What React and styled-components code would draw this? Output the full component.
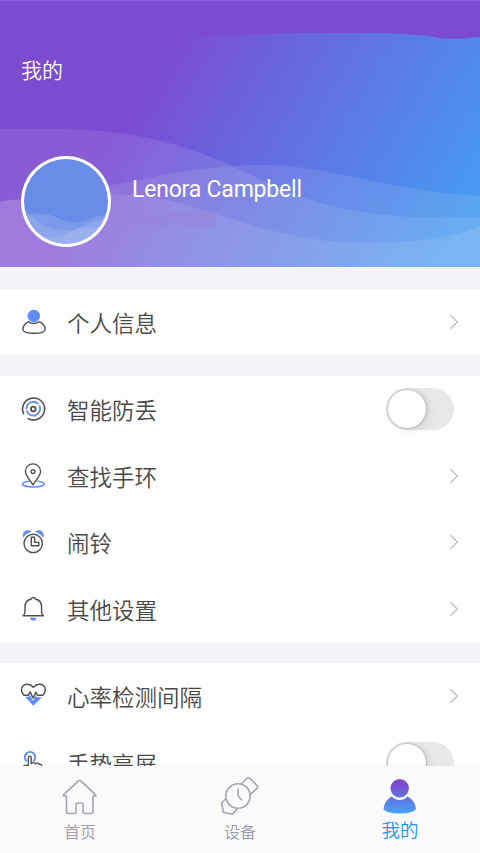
import styled, { createGlobalStyle } from "styled-components";

const GlobalStyle = createGlobalStyle`
  * {
    box-sizing: border-box;
  }

  body {
    margin: 0;
    background-color: #f4f4f8;
    font-family: Roboto, "Noto Sans CJK SC", sans-serif;
  }
`;

const Screen = styled.div`
  display: flex;
  flex-direction: column;
  width: 480px;
  height: 853px;
  overflow: hidden;
  background-color: #f4f4f8;
`;

// Header with the gradient and the waves behind the profile
const Header = styled.header`
  position: relative;
  flex: none;
  height: 267px;
  padding: 55px 20px 0 21px;
  color: #fff;
  background: linear-gradient(
    120deg,
    #7b4bd0 31%,
    #7655d5 38%,
    #6a64dc 49%,
    #479aef 93%
  );
`;

const Waves = styled.svg`
  position: absolute;
  inset: 0;
`;

const Title = styled.h1`
  position: relative;
  margin: 0;
  font-size: 21px;
  font-weight: 350;
  line-height: 32px;
`;

const Profile = styled.div`
  position: relative;
  display: flex;
  margin-top: 69px;
`;

const Avatar = styled.div`
  width: 90px;
  height: 91px;
  margin-right: 21px;
  border: 3px solid #fff;
  border-radius: 50%;
  overflow: hidden;
  background-color: #698de6;

  svg {
    display: block;
  }
`;

const UserName = styled.p`
  margin: 20px 0 0;
  font-size: 23px;
  line-height: 28px;
  letter-spacing: -0.2px;
`;

const Content = styled.main`
  display: flex;
  flex: 1;
  flex-direction: column;
  gap: 21px;
  min-height: 0;
  padding-top: 22px;
  overflow: hidden;
`;

const Card = styled.section`
  flex: none;
  background-color: #fff;
`;

const Row = styled.div`
  display: flex;
  align-items: center;
  height: ${(props) => props.$height || "66.5px"};
  padding: 0 20px;
`;

const RowIcon = styled.svg`
  flex: none;
  width: 28px;
  height: 28px;
  margin-right: 19px;
  fill: none;
  stroke: #505050;
  stroke-width: 1.4;
  stroke-linecap: round;
  stroke-linejoin: round;
`;

const RowLabel = styled.span`
  flex: 1;
  padding-top: 4px;
  color: #484848;
  font-size: 22.5px;
  font-weight: 350;
  line-height: 32px;
`;

const Arrow = styled.svg`
  width: 12px;
  height: 16px;
  fill: none;
  stroke: #c6c6c6;
  stroke-width: 1.6;
`;

const Switch = styled.div`
  width: 68px;
  height: 42px;
  margin-right: 6px;
  padding: 2px;
  border-radius: 21px;
  background-color: #e8e8e8;
`;

const Knob = styled.div`
  width: 38px;
  height: 38px;
  border-radius: 50%;
  background-color: #fff;
  box-shadow: 0 0 3px rgba(0, 0, 0, 0.3), 3px 2px 8px rgba(0, 0, 0, 0.1);
`;

const TabBar = styled.nav`
  display: flex;
  flex: none;
  height: 87px;
  background-color: #fafafa;
  box-shadow: 0 0 3px rgba(0, 0, 0, 0.04);
`;

const Tab = styled.div`
  display: flex;
  flex: 1;
  flex-direction: column;
  align-items: center;
  padding-top: 10px;
  color: ${(props) => (props.$active ? "#2196f3" : "#9a9cab")};
  font-size: ${(props) => (props.$active ? "18.5px" : "16px")};
  font-weight: 350;
  line-height: ${(props) => (props.$active ? "31px" : "33px")};

  svg {
    width: 40px;
    height: 40px;
    fill: none;
    stroke: #a3a5b3;
    stroke-width: 1.6;
    stroke-linecap: round;
    stroke-linejoin: round;
  }
`;

const BLUE = "#628cfb";

const icons = {
  user: (
    <>
      <circle cx="13.8" cy="8" r="6.2" fill={BLUE} stroke="none" />
      <path d="M8.7 13.7C5 15 2.8 18.6 2.8 21.2C2.8 24 8 25.3 14 25.3S25.2 24 25.2 21.2C25.2 18.6 23 15 18.9 13.7C16 16 11.6 16 8.7 13.7Z" />
    </>
  ),
  radar: (
    <>
      <path d="M3.6 18.6A11 11 0 1 1 8.2 23.6" strokeWidth="1.6" />
      <path d="M17.8 8.6A6.8 6.8 0 0 0 6.5 13.4M6.8 16.2A6.8 6.8 0 1 0 19.6 11.2" stroke={BLUE} strokeWidth="1.9" />
      <circle cx="13.3" cy="14" r="2.3" strokeWidth="1.8" />
    </>
  ),
  pin: (
    <>
      <path d="M8.8 19.2C4.8 19.8 2.4 20.8 2.4 22C2.4 23.7 7.3 25 13.3 25S24.3 23.7 24.3 22C24.3 20.8 21.7 19.8 17.8 19.2" stroke={BLUE} strokeWidth="1.6" />
      <path d="M13 22.8C10.5 19.2 5.4 13.3 5.4 9.5A7.6 7.6 0 0 1 20.6 9.5C20.6 13.3 15.5 19.2 13 22.8Z" />
      <circle cx="13" cy="9.6" r="1.9" />
    </>
  ),
  clock: (
    <>
      <path d="M3.4 8.7C2.4 3.6 6.2 1.2 10.9 3.6C7.8 4.8 5.4 6.3 3.4 8.7Z" fill={BLUE} stroke={BLUE} strokeWidth=".8" />
      <path d="M23.1 8.7C24.1 3.6 20.3 1.2 15.6 3.6C18.7 4.8 21.1 6.3 23.1 8.7Z" fill={BLUE} stroke={BLUE} strokeWidth=".8" />
      <circle cx="13.2" cy="15.4" r="9.2" />
      <path d="M11.3 9.3H14.6V14.4H18.8V17.8H11.3Z" />
    </>
  ),
  bell: (
    <>
      <path d="M11.3 4C11.8 2 14.8 2 15.3 4C19.4 4.8 21.6 7.8 21.6 12V17.5C21.7 19 22.6 19.4 23.5 20.8H3.1C4 19.4 4.9 19 5 17.5V12C5 7.8 7.2 4.8 11.3 4Z" />
      <path d="M10 22.8H16.6C16 24.8 14.9 25.7 13.3 25.7S10.6 24.8 10 22.8Z" fill={BLUE} stroke="none" />
    </>
  ),
  heart: (
    <>
      <path d="M5 14.8H9L10.2 12.8L13 19L15.9 13.4L17 15.2H21.8L13.3 23.8Z" fill={BLUE} stroke="none" />
      <path d="M4 13.3C-.8 8.5 2 2.2 7.3 2.2C10.2 2.2 12 3.7 13.3 5.2C14.8 3.7 16.6 2.2 19.4 2.2C25 2.2 27.6 8.5 22.8 13.3H17.5L15.8 10.2L13.2 16.2L10.2 9.8L8.2 13.3Z" />
    </>
  ),
  touch: (
    <>
      <path d="M6.4 11.9A5.2 5.2 0 1 1 13.6 11.9" stroke={BLUE} strokeWidth="1.8" />
      <path d="M4 16.7C5.3 15.9 7.2 16.1 8.4 17.2V8.8C8.4 6.6 11.2 6.6 11.2 8.8V14.6C13 13.2 15 13.4 15.4 14.9C17.2 13.6 18.6 14 19.1 15.4C20.8 14.8 21.8 15.5 21.8 17.4V22C21.8 24.7 19.8 26 17 26H13C9.5 26 6 21.5 4 16.7" />
    </>
  ),
};

const groups = [
  [{ icon: "user", label: "个人信息" }],
  [
    { icon: "radar", label: "智能防丢", toggle: true },
    { icon: "pin", label: "查找手环" },
    { icon: "clock", label: "闹铃" },
    { icon: "bell", label: "其他设置" },
  ],
  [
    { icon: "heart", label: "心率检测间隔" },
    { icon: "touch", label: "手势亮屏", toggle: true },
  ],
];

function MenuRow({ icon, label, toggle, height }) {
  return (
    <Row $height={height}>
      <RowIcon viewBox="0 0 28 28">{icons[icon]}</RowIcon>
      <RowLabel>{label}</RowLabel>
      {toggle ? (
        <Switch>
          <Knob />
        </Switch>
      ) : (
        <Arrow viewBox="0 0 12 16">
          <path d="M2.5 1.2L9.3 8L2.5 14.8" />
        </Arrow>
      )}
    </Row>
  );
}

function App() {
  return (
    <>
      <GlobalStyle />
      <Screen>
        <Header>
          <Waves width="480" height="267" viewBox="0 0 480 267">
            <path
              fill="#7b4bd0"
              d="M0 0H480V37C466 38 456 40 440 38C425 35 400 33 370 33H300C265 33 245 36 200 35C150 30 85 32 28 38L0 35Z"
            />
            <path fill="#fff" fillOpacity=".12" d="M0 0H480V1H0Z" />
            <g fill="#fff" fillOpacity=".1">
              <path d="M0 129H60C130 129 190 145 240 170C310 203 350 221 480 217V267H0Z" />
              <path d="M0 201C50 198 90 188 125 183C170 173 215 165 262 165C330 165 380 190 480 196V267H0Z" />
              <path d="M0 202C55 194 130 187 190 206C255 226 300 243 370 243C415 243 450 238 480 226V267H0Z" />
            </g>
            {/* faint smudge under the user name */}
            <path
              fill="#9a82dc"
              fillOpacity=".5"
              d="M134 213C160 210 190 213 214 211C218 215 218 224 213 226C190 225 160 227 133 224Z"
            />
          </Waves>
          <Title>我的</Title>
          <Profile>
            <Avatar>
              <svg width="84" height="85" viewBox="0 0 84 85">
                <g fill="#fff" fillOpacity=".12">
                  <path d="M0 49C12 60 18 71 40 71C58 71 65 67 84 68V85H0Z" />
                  <path d="M0 58C12 52 24 54 36 60C46 65 58 65 66 60C72 57 78 57 84 56V85H0Z" />
                  <path d="M0 72C15 79 28 80 42 75C56 69 60 65 84 58V85H0Z" />
                </g>
              </svg>
            </Avatar>
            <UserName>Lenora Campbell</UserName>
          </Profile>
        </Header>

        <Content>
          {groups.map((rows, i) => (
            <Card key={i}>
              {rows.map((row) => (
                <MenuRow key={row.label} {...row} height={i === 0 ? "66px" : undefined} />
              ))}
            </Card>
          ))}
        </Content>

        <TabBar>
          <Tab>
            <svg viewBox="0 0 40 40">
              <path d="M6.5 20V35.5Q6.5 37.5 8.5 37.5H14.3Q16 37.5 16 35.5V28.5Q16 27 17.5 27H21.5Q23 27 23 28.5V35.5Q23 37.5 24.8 37.5H31Q33 37.5 33 35.5V20H35.5Q36.3 19.5 35.5 18.7L21 5.2Q19.6 4 18.2 5.2L3.7 18.7Q3 19.6 4 20Z" />
            </svg>
            首页
          </Tab>
          <Tab>
            <svg viewBox="0 0 40 40">
              <circle cx="18" cy="20" r="12.2" />
              <path d="M18.2 13.2V20.2L21.7 23.8M21.2 8.2L27 2.2Q28.2 1.2 29.8 2.2L37 9.5Q38 11 37 12.3L30.2 18.7M5.5 23L1.7 27L3.3 36.2L12.5 38.2L16.8 33.2" />
            </svg>
            设备
          </Tab>
          <Tab $active>
            <svg viewBox="0 0 40 40">
              <defs>
                <linearGradient id="mine" gradientUnits="userSpaceOnUse" x1="0" y1="8" x2="0" y2="38">
                  <stop stopColor="#7b4bd0" />
                  <stop offset="1" stopColor="#45a4f5" />
                </linearGradient>
              </defs>
              <g fill="url(#mine)" stroke="none">
                <circle cx="19.7" cy="12.2" r="9.2" />
                <path d="M11.8 20.5C16.2 25.2 23.2 25.2 27.5 20.5C32.2 22.8 35.6 27.5 35.9 33.2C31.5 39 8.2 39 3.6 33.2C4 27.5 7.2 22.8 11.8 20.5Z" />
              </g>
            </svg>
            我的
          </Tab>
        </TabBar>
      </Screen>
    </>
  );
}

export default App;
